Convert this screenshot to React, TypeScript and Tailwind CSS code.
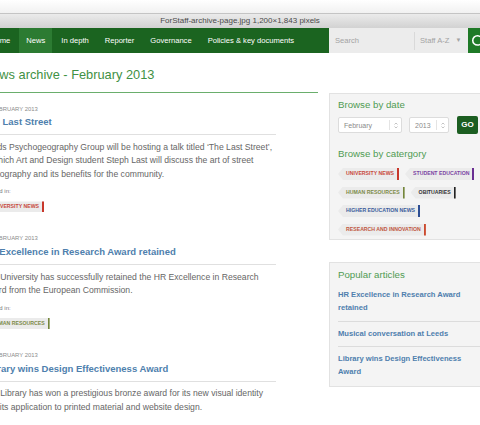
import { Search } from "lucide-react";

type TagDef = { label: string; text: string; bar: string };

const TAGS: Record<string, TagDef> = {
  university: { label: "University news", text: "text-[#c8493d]", bar: "border-[#c8372b]" },
  student: { label: "Student education", text: "text-[#7b44a3]", bar: "border-[#6a2f92]" },
  hr: { label: "Human resources", text: "text-[#7d8a48]", bar: "border-[#74863a]" },
  obituaries: { label: "Obituaries", text: "text-[#333]", bar: "border-[#222]" },
  higher: { label: "Higher education news", text: "text-[#3a5c9c]", bar: "border-[#2e4f94]" },
  research: { label: "Research and innovation", text: "text-[#c0573f]", bar: "border-[#cc4b2f]" },
};

const navLinks = ["Home", "News", "In depth", "Reporter", "Governance", "Policies & key documents"];

const articles = [
  {
    date: "28 February 2013",
    title: "The Last Street",
    lines: [
      "Leeds Psychogeography Group will be hosting a talk titled \u2018The Last Street\u2019,",
      "in which Art and Design student Steph Last will discuss the art of street",
      "photography and its benefits for the community.",
    ],
    tag: TAGS.university,
  },
  {
    date: "26 February 2013",
    title: "HR Excellence in Research Award retained",
    lines: [
      "The University has successfully retained the HR Excellence in Research",
      "award from the European Commission.",
    ],
    tag: TAGS.hr,
  },
  {
    date: "25 February 2013",
    title: "Library wins Design Effectiveness Award",
    lines: [
      "The Library has won a prestigious bronze award for its new visual identity",
      "and its application to printed material and website design.",
    ],
    tag: null,
  },
];

const popular = [
  "HR Excellence in Research Award retained",
  "Musical conversation at Leeds",
  "Library wins Design Effectiveness Award",
];

function Tag({ tag, small }: { tag: TagDef; small?: boolean }) {
  return (
    <span
      className={`inline-flex items-center whitespace-nowrap border-r-2 bg-[#ebebeb] pl-[8px] pr-[3px] text-[5.2px] font-bold uppercase leading-none [clip-path:polygon(5px_0,100%_0,100%_100%,5px_100%,0_50%)] ${
        small ? "h-[11px]" : "h-[12px]"
      } ${tag.text} ${tag.bar}`}
    >
      {tag.label}
    </span>
  );
}

function Select({ value, className }: { value: string; className: string }) {
  return (
    <div className={`flex h-[16px] items-center rounded-[2px] border border-[#dcdcdc] bg-white ${className}`}>
      <span className="flex-1 pl-[5px] text-[7px] leading-none text-[#8a8a8a]">{value}</span>
      <span className="flex h-[10px] w-[12px] items-center justify-center border-l border-[#e4e4e4]">
        <svg width="4" height="7" viewBox="0 0 4 7" aria-hidden>
          <path d="M0.5 2.5 L2 1 L3.5 2.5 M0.5 4.5 L2 6 L3.5 4.5" fill="none" stroke="#b5b5b5" strokeWidth="0.8" />
        </svg>
      </span>
    </div>
  );
}

export default function App() {
  return (
    <div className="relative h-[425px] w-[480px] overflow-hidden bg-white font-['Liberation_Sans',Arial,sans-serif]">
      {/* window chrome */}
      <div className="h-[14px] border-b border-[#c4c4c4] bg-gradient-to-b from-white to-[#f1f1f1]" />
      <div className="flex h-[14px] items-center justify-center bg-gradient-to-b from-[#ebebeb] to-[#d2d2d2] text-[8px] leading-none text-[#4a4a4a]">
        ForStaff-archive-page.jpg 1,200×1,843 pixels
      </div>

      <div className="-ml-[17px] w-[520px]">
        {/* nav */}
        <div className="flex h-[25px]">
          <nav className="flex w-[346px] items-stretch gap-[2px] bg-[#1b6420] text-[7.6px] text-white">
            {navLinks.map((link) => (
              <a
                key={link}
                className={`flex items-center whitespace-nowrap px-[7px] ${link === "News" ? "bg-[#2c7b32]" : ""}`}
              >
                {link}
              </a>
            ))}
          </nav>
          <div className="flex w-[139px] items-center bg-[#ececec] text-[7.6px] text-[#a3a3a3]">
            <span className="w-[85px] pl-[6px]">Search</span>
            <span className="h-[18px] border-l border-[#d9d9d9]" />
            <span className="flex flex-1 items-center gap-[6px] pl-[5px]">
              Staff A-Z <span className="text-[6px]">▼</span>
            </span>
          </div>
          <div className="flex w-[30px] items-center bg-[#1f7a27] pl-[3px] text-white">
            <Search size={14} strokeWidth={2.6} />
          </div>
        </div>

        <div className="flex">
          {/* main column */}
          <main className="w-[335px]">
            <h1 className="mt-[14px] border-b-[1.5px] border-[#6aae6c] pb-[9px] text-[12.8px] leading-[16px] text-[#3f9144]">
              News archive - February 2013
            </h1>

            <div className="mt-[11.5px] flex flex-col gap-[22px]">
              {articles.map((a) => (
                <article key={a.title} className="w-[293px]">
                  <p className="whitespace-nowrap text-[5.9px] uppercase leading-[8px] text-[#8c8c8c]">{a.date}</p>
                  <h2 className="mt-[3.7px] whitespace-nowrap border-b border-[#e0e0e0] pb-[6.3px] text-[9.5px] font-bold leading-[12px] text-[#4e80ad]">
                    {a.title}
                  </h2>
                  <p className="mt-[5.5px] whitespace-nowrap text-[8.65px] leading-[13.5px] text-[#666]">
                    {a.lines.map((line, i) => (
                      <span key={i} className="block">
                        {line}
                      </span>
                    ))}
                  </p>
                  {a.tag && (
                    <>
                      <p className="mt-[6px] text-[6px] leading-[8px] text-[#777]">Tagged in:</p>
                      <div className="mt-[6px] flex">
                        <Tag tag={a.tag} small />
                      </div>
                    </>
                  )}
                </article>
              ))}
            </div>
          </main>

          {/* sidebar */}
          <aside className="ml-[11px] mt-[40px] w-[160px]">
            <section className="border border-[#e2e2e2] bg-[#f4f4f4] pb-[3px] pl-[8px] pt-[5px]">
              <h3 className="text-[9.7px] leading-[12px] text-[#4f9b52]">Browse by date</h3>
              <div className="mt-[5px] flex h-[18px] items-center">
                <Select value="February" className="w-[64px]" />
                <Select value="2013" className="ml-[7px] w-[40px]" />
                <button className="ml-[8px] h-[18px] w-[21px] rounded-[2px] bg-[#1c5e21] text-[8px] font-bold text-white">
                  GO
                </button>
              </div>

              <h3 className="mt-[14px] text-[9.7px] leading-[12px] text-[#4f9b52]">Browse by catergory</h3>
              <div className="mt-[8px] flex w-[142px] flex-wrap gap-x-[6px] gap-y-[6.5px]">
                <Tag tag={TAGS.university} />
                <Tag tag={TAGS.student} />
                <Tag tag={TAGS.hr} />
                <Tag tag={TAGS.obituaries} />
                <Tag tag={TAGS.higher} />
                <Tag tag={TAGS.research} />
              </div>
            </section>

            <section className="mt-[22px] border border-[#e2e2e2] bg-[#f4f4f4] pb-[8px] pl-[8px] pt-[6px]">
              <h3 className="text-[9.7px] leading-[12px] text-[#4f9b52]">Popular articles</h3>
              <ul className="mt-[8.75px]">
                {popular.map((title, i) => (
                  <li
                    key={title}
                    className={`${i > 0 ? "border-t border-[#dcdcdc] pt-[6px]" : ""} ${
                      i < popular.length - 1 ? "pb-[6.25px]" : ""
                    }`}
                  >
                    <a className="block w-[130px] text-[7.6px] font-bold leading-[12.5px] text-[#4f7fae]">{title}</a>
                  </li>
                ))}
              </ul>
            </section>
          </aside>
        </div>
      </div>
    </div>
  );
}
